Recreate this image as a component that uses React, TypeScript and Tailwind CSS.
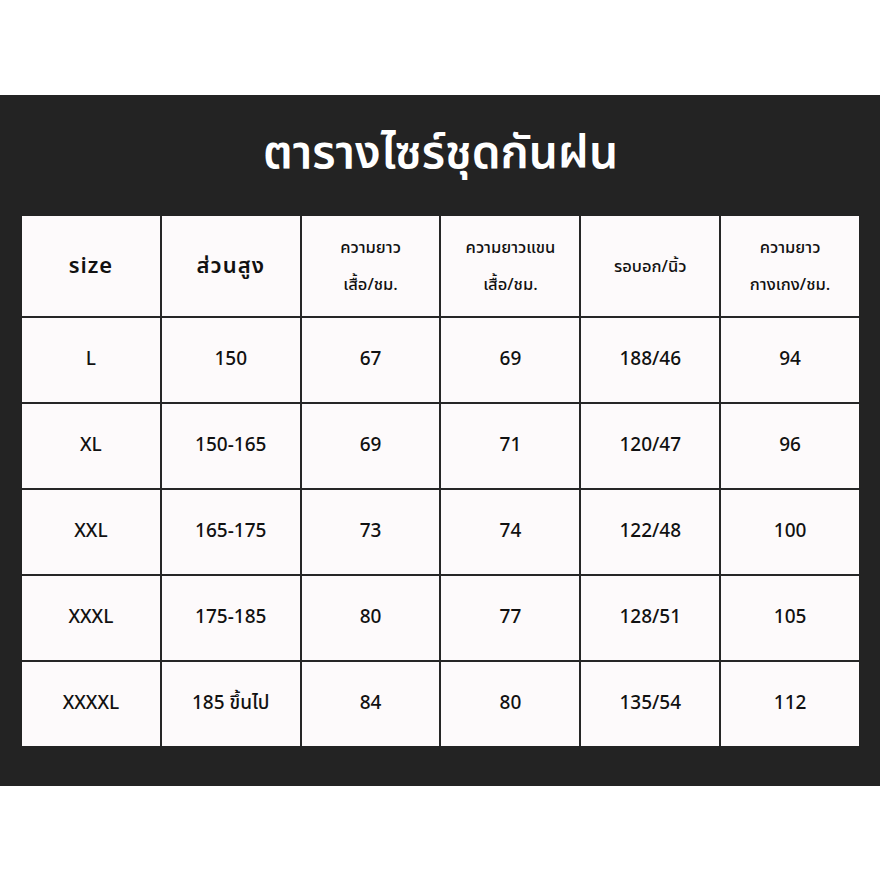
const headers: { lines: string[]; big?: boolean }[] = [
  { lines: ["size"], big: true },
  { lines: ["ส่วนสูง"], big: true },
  { lines: ["ความยาว", "เสื้อ/ชม."] },
  { lines: ["ความยาวแขน", "เสื้อ/ชม."] },
  { lines: ["รอบอก/นิ้ว"] },
  { lines: ["ความยาว", "กางเกง/ชม."] },
];

const rows = [
  ["L", "150", "67", "69", "188/46", "94"],
  ["XL", "150-165", "69", "71", "120/47", "96"],
  ["XXL", "165-175", "73", "74", "122/48", "100"],
  ["XXXL", "175-185", "80", "77", "128/51", "105"],
  ["XXXXL", "185 ขึ้นไป", "84", "80", "135/54", "112"],
];

export default function App() {
  return (
    <div
      className="min-h-[880px] bg-white pt-[95px]"
      style={{ fontFamily: '"Noto Sans Thai", "Noto Sans Thai Looped", "Noto Sans", "Liberation Sans", sans-serif' }}
    >
      <div className="flex h-[691px] flex-col bg-[#232323] pl-[22px] pr-[21px]">
        <div className="flex h-[121px] items-center justify-center pb-[4px]">
          <h1 className="text-[46px] font-semibold leading-none text-white">ตารางไซร์ชุดกันฝน</h1>
        </div>

        <div className="grid grid-cols-6 grid-rows-[100px_84px_84px_84px_84px_84px] gap-[2px] bg-[#262626]">
          {headers.map((h, i) => (
            <div key={i} className="flex flex-col items-center justify-center bg-[#fdfafb] text-[#111]">
              {h.big ? (
                <span className="text-[22px] font-semibold tracking-[1px]">{h.lines[0]}</span>
              ) : (
                h.lines.map((l, j) => (
                  <span key={j} className="text-[16.5px] font-medium leading-[37px]">
                    {l}
                  </span>
                ))
              )}
            </div>
          ))}
          {rows.map((r, ri) =>
            r.map((c, ci) => (
              <div
                key={`${ri}-${ci}`}
                className="flex items-center justify-center bg-[#fdfafb] text-[19px] font-medium text-[#111]"
              >
                {c}
              </div>
            ))
          )}
        </div>
      </div>
    </div>
  );
}
